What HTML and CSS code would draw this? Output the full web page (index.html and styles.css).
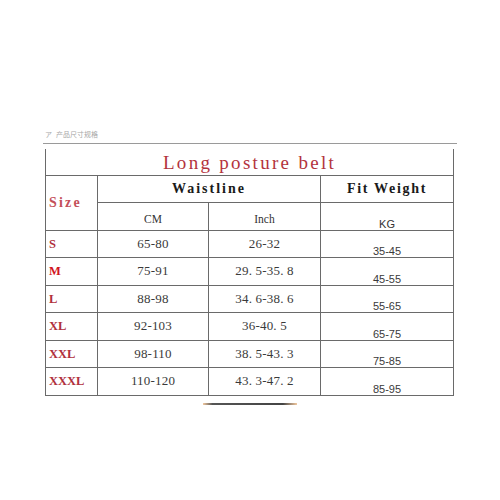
FILE: index.html
```html
<!DOCTYPE html>
<html>
<head>
<meta charset="utf-8">
<link rel="stylesheet" href="styles.css">
</head>
<body>
<div class="page">
  <div class="caption">ア&nbsp;&nbsp;产品尺寸规格</div>
  <div class="rule"></div>
  <table class="chart">
    <colgroup>
      <col class="c-size"><col class="c-cm"><col class="c-inch"><col class="c-kg">
    </colgroup>
    <tr class="r-title"><td colspan="4" class="title">Long posture belt</td></tr>
    <tr class="r-head">
      <td rowspan="2" class="size-head">Size</td>
      <td colspan="2" class="head">Waistline</td>
      <td class="head head-fit">Fit Weight</td>
    </tr>
    <tr class="r-sub">
      <td class="sub">CM</td>
      <td class="sub">Inch</td>
      <td class="sub kg">KG</td>
    </tr>
    <tr class="r-data"><td class="size">S</td><td class="num">65-80</td><td class="num">26-32</td><td class="wt">35-45</td></tr>
    <tr class="r-data"><td class="size bright">M</td><td class="num">75-91</td><td class="num">29. 5-35. 8</td><td class="wt">45-55</td></tr>
    <tr class="r-data"><td class="size">L</td><td class="num">88-98</td><td class="num">34. 6-38. 6</td><td class="wt">55-65</td></tr>
    <tr class="r-data"><td class="size">XL</td><td class="num">92-103</td><td class="num">36-40. 5</td><td class="wt">65-75</td></tr>
    <tr class="r-data"><td class="size">XXL</td><td class="num">98-110</td><td class="num">38. 5-43. 3</td><td class="wt">75-85</td></tr>
    <tr class="r-data"><td class="size">XXXL</td><td class="num">110-120</td><td class="num">43. 3-47. 2</td><td class="wt">85-95</td></tr>
  </table>
  <div class="underline"></div>
</div>
</body>
</html>
```
FILE: styles.css
```css
html, body {
  margin: 0;
  padding: 0;
  background: #ffffff;
}
.page {
  width: 414px;
  margin-left: 43px;
  padding-top: 130px;
  display: flex;
  flex-direction: column;
}
.caption {
  font-family: "Liberation Sans", "Noto Sans CJK SC", sans-serif;
  font-size: 7px;
  line-height: 10px;
  color: #a8a8a8;
  padding-left: 2px;
  height: 10px;
}
.rule {
  height: 1px;
  background: #9a9a9a;
  margin-top: 3px;
}
.chart {
  margin-top: 5px;
  margin-left: 2px;
  width: 408px;
  border-collapse: collapse;
  table-layout: fixed;
}
.c-size { width: 52px; }
.c-cm { width: 111px; }
.c-inch { width: 112px; }
.c-kg { width: 133px; }
.chart td {
  border: 1px solid #6a6a6a;
  padding: 0;
  text-align: center;
  vertical-align: middle;
  line-height: 14px;
  color: #444;
}
.chart .r-title td { border-top: none; }
.r-title { height: 26px; }
.r-head { height: 27px; }
.r-sub { height: 28px; }
.r-data { height: 27.5px; }
.title {
  font-family: "Liberation Serif", serif;
  font-size: 19px;
  letter-spacing: 2.3px;
  color: #b3333d !important;
  padding-top: 2px !important;
}
.head {
  font-family: "Liberation Serif", serif;
  font-weight: bold;
  font-size: 14px;
  letter-spacing: 2px;
  color: #1a1a1a !important;
}
.head-fit { letter-spacing: 1.7px; }
.size-head {
  font-family: "Liberation Serif", serif;
  font-weight: bold;
  font-size: 14px;
  letter-spacing: 2.2px;
  text-align: left !important;
  padding-left: 3px !important;
  color: #c4505a !important;
}
.sub {
  font-family: "Liberation Serif", serif;
  font-size: 11.5px;
  padding-top: 5px !important;
  color: #333 !important;
}
.sub.kg {
  font-family: "Liberation Sans", sans-serif;
  font-size: 11px;
  vertical-align: bottom;
  line-height: 12px;
  padding-top: 0 !important;
  padding-bottom: 0 !important;
}
.size {
  font-family: "Liberation Serif", serif;
  font-weight: bold;
  font-size: 12.5px;
  text-align: left !important;
  padding-left: 3px !important;
  color: #b0303c !important;
}
.size.bright { color: #d0141e !important; }
.num {
  font-family: "Liberation Serif", serif;
  font-size: 13px;
  letter-spacing: 0.2px;
  color: #3a3a3a !important;
}
.wt {
  font-family: "Liberation Sans", sans-serif;
  font-size: 11px;
  vertical-align: bottom !important;
  line-height: 12px !important;
  color: #3a3a3a !important;
}
.underline {
  align-self: flex-start;
  margin-left: 160px;
  margin-top: 7px;
  width: 94px;
  height: 2px;
  background: linear-gradient(to right, #f2c9a0 0%, #555 10%, #444 85%, #f2c9a0 100%);
}
```
